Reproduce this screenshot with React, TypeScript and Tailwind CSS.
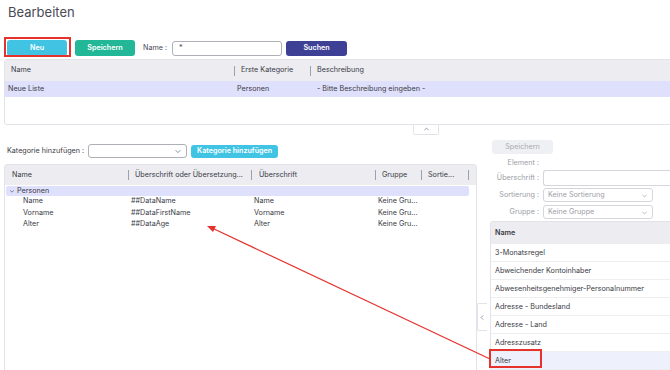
import React from 'react';

const font = { fontFamily: 'Inter, "Noto Sans", sans-serif' };

function Sep() {
  return <span className="w-px h-[10px] bg-gray-400 shrink-0" />;
}

function Chevron({ dir = 'down', className = '' }: { dir?: 'down' | 'up' | 'left'; className?: string }) {
  const d = dir === 'down' ? 'M2 4l3 3 3-3' : dir === 'up' ? 'M2 6l3-3 3 3' : 'M6 2L3 5l3 3';
  return (
    <svg viewBox="0 0 10 10" className={className} fill="none" stroke="currentColor" strokeWidth="1">
      <path d={d} />
    </svg>
  );
}

const lowerRows = [
  ['Name', '##DataName', 'Name', 'Keine Gru...'],
  ['Vorname', '##DataFirstName', 'Vorname', 'Keine Gru...'],
  ['Alter', '##DataAge', 'Alter', 'Keine Gru...'],
];

const elements = [
  '3-Monatsregel',
  'Abweichender Kontoinhaber',
  'Abwesenheitsgenehmiger-Personalnummer',
  'Adresse - Bundesland',
  'Adresse - Land',
  'Adresszusatz',
  'Alter',
];

export default function App() {
  return (
    <div className="relative w-[670px] h-[370px] overflow-hidden bg-white text-[#3b3b45] text-[7.2px]" style={font}>
      {/* title */}
      <div className="pl-[8px] pt-[3px] h-[40px] text-[13px] text-[#4a4a55]">Bearbeiten</div>

      {/* toolbar */}
      <div className="flex items-center h-[16px] pl-[7px] gap-[8px]">
        <button className="w-[60px] h-[16px] rounded-[3px] bg-[#41c4e3] text-white font-semibold">Neu</button>
        <button className="w-[60px] h-[16px] rounded-[3px] bg-[#22b797] text-white font-semibold">Speichern</button>
        <span className="text-[#4a4a55]">Name :</span>
        <div className="-ml-[3px] w-[110px] h-[15px] rounded-[3px] border border-[#aeb0b8] flex items-center pl-[6px]">*</div>
        <button className="-ml-[4px] w-[61px] h-[15px] rounded-[3px] bg-[#3e4095] text-white font-semibold">Suchen</button>
      </div>

      {/* top table */}
      <div className="ml-[4px] mt-[3px] w-[680px] h-[66px] rounded-l-[3px] border border-[#e2e3e8]">
        <div className="flex items-center h-[21px] bg-[#ececf1]">
          <div className="w-[229px] pl-[6px]">Name</div>
          <Sep />
          <div className="w-[75px] pl-[6px]">Erste Kategorie</div>
          <Sep />
          <div className="pl-[6px]">Beschreibung</div>
        </div>
        <div className="flex items-center h-[16px] bg-[#dfe0fb]">
          <div className="w-[229px] pl-[3px]">Neue Liste</div>
          <div className="w-[78px] pl-[3px]">Personen</div>
          <div className="pl-[5px]">- Bitte Beschreibung eingeben -</div>
        </div>
      </div>
      <div className="ml-[413px] w-[26px] h-[10px] border border-t-0 border-[#e2e3e8] rounded-b-[2px] flex items-center justify-center text-gray-500">
        <Chevron dir="up" className="w-[7px] h-[7px]" />
      </div>

      {/* lower area */}
      <div className="flex mt-[5px]">
        {/* left */}
        <div className="w-[473px] ml-[4px] shrink-0">
          <div className="flex items-center h-[14px] mt-[4px] gap-[4px] pl-[3px]">
            <span>Kategorie hinzufügen :</span>
            <div className="w-[99px] h-[14px] rounded-[3px] border border-[#aeb0b8] flex items-center justify-end pr-[4px] text-gray-500">
              <Chevron className="w-[8px] h-[8px]" />
            </div>
            <button className="w-[87px] h-[13px] rounded-[3px] bg-[#41c4e3] text-white font-semibold">Kategorie hinzufügen</button>
          </div>
          <div className="mt-[6px] h-[220px] rounded-t-[3px] border border-[#e2e3e8]">
            <div className="flex items-center h-[20px] bg-[#ececf1]">
              <div className="w-[123px] pl-[7px]">Name</div>
              <Sep />
              <div className="w-[122px] pl-[6px]">Überschrift oder Übersetzung...</div>
              <Sep />
              <div className="w-[123px] pl-[7px]">Überschrift</div>
              <Sep />
              <div className="w-[45px] pl-[6px]">Gruppe</div>
              <Sep />
              <div className="w-[46px] pl-[6px]">Sortie...</div>
              <Sep />
            </div>
            <div className="mx-[1px] mt-[1px] w-[463px] h-[10px] rounded-[2px] bg-[#dfe0fb] flex items-center pl-[3px] gap-[2px]">
              <Chevron className="w-[6px] h-[6px]" />
              <span>Personen</span>
            </div>
            <div>
              {lowerRows.map((r) => (
                <div key={r[0]} className="flex items-center h-[11.5px]">
                  <div className="w-[126px] pl-[18px]">{r[0]}</div>
                  <div className="w-[123px]">{r[1]}</div>
                  <div className="w-[124px]">{r[2]}</div>
                  <div>{r[3]}</div>
                </div>
              ))}
            </div>
          </div>
        </div>

        {/* collapse tab */}
        <div className="w-[13px] shrink-0 flex items-start">
          <div className="mt-[163px] w-[10px] h-[28px] border border-r-0 border-[#e2e3e8] rounded-l-[2px] flex items-center justify-center text-gray-500">
            <Chevron dir="left" className="w-[7px] h-[7px]" />
          </div>
        </div>

        {/* right panel */}
        <div className="flex-1">
          <div className="ml-[2px] w-[61px] h-[14px] rounded-[3px] bg-[#eef0f4] text-[#a9abb3] flex items-center justify-center">Speichern</div>
          <div className="flex flex-col text-[#9c9ea6]">
            <div className="flex items-center h-[14px] mt-[2px]">
              <span className="w-[49px] text-right">Element :</span>
            </div>
            <div className="flex items-center h-[16px]">
              <span className="w-[49px] text-right">Überschrift :</span>
              <div className="ml-[4px] flex-1 h-[16px] rounded-l-[3px] border border-r-0 border-[#d4d6dc]" />
            </div>
            <div className="flex items-center h-[14px] mt-[2px]">
              <span className="w-[49px] text-right">Sortierung :</span>
              <div className="ml-[4px] w-[110px] h-[14px] rounded-[3px] border border-[#d4d6dc] flex items-center justify-between px-[4px]">
                <span>Keine Sortierung</span>
                <Chevron className="w-[7px] h-[7px]" />
              </div>
            </div>
            <div className="flex items-center h-[14px] mt-[3px]">
              <span className="w-[49px] text-right">Gruppe :</span>
              <div className="ml-[4px] w-[110px] h-[14px] rounded-[3px] border border-[#d4d6dc] flex items-center justify-between px-[4px]">
                <span>Keine Gruppe</span>
                <Chevron className="w-[7px] h-[7px]" />
              </div>
            </div>
          </div>
          <div className="mt-[2px] h-[160px] rounded-tl-[3px] border border-r-0 border-[#e2e3e8]">
            <div className="h-[22px] bg-[#ececf1] flex items-center pl-[4px] font-semibold">Name</div>
            {elements.map((e) => (
              <div
                key={e}
                className={
                  'h-[18px] flex items-center pl-[4px] pt-[1px] border-b border-[#eceef2] ' +
                  (e === 'Alter' ? 'bg-[#eef0fb]' : '')
                }
              >
                {e}
              </div>
            ))}
          </div>
        </div>
      </div>

      {/* annotations */}
      <div className="absolute left-[4px] top-[37px] w-[67px] h-[20px] border-2 border-[#e5322d]" />
      <div className="absolute left-[489px] top-[349px] w-[53px] h-[19px] border-2 border-[#e5322d]" />
      <svg className="absolute left-0 top-0 pointer-events-none" width="670" height="370">
        <line x1="490" y1="359" x2="212" y2="228" stroke="#e5322d" strokeWidth="1.2" />
        <polygon points="207,226 216,226 213,232" fill="#e5322d" />
      </svg>
    </div>
  );
}
